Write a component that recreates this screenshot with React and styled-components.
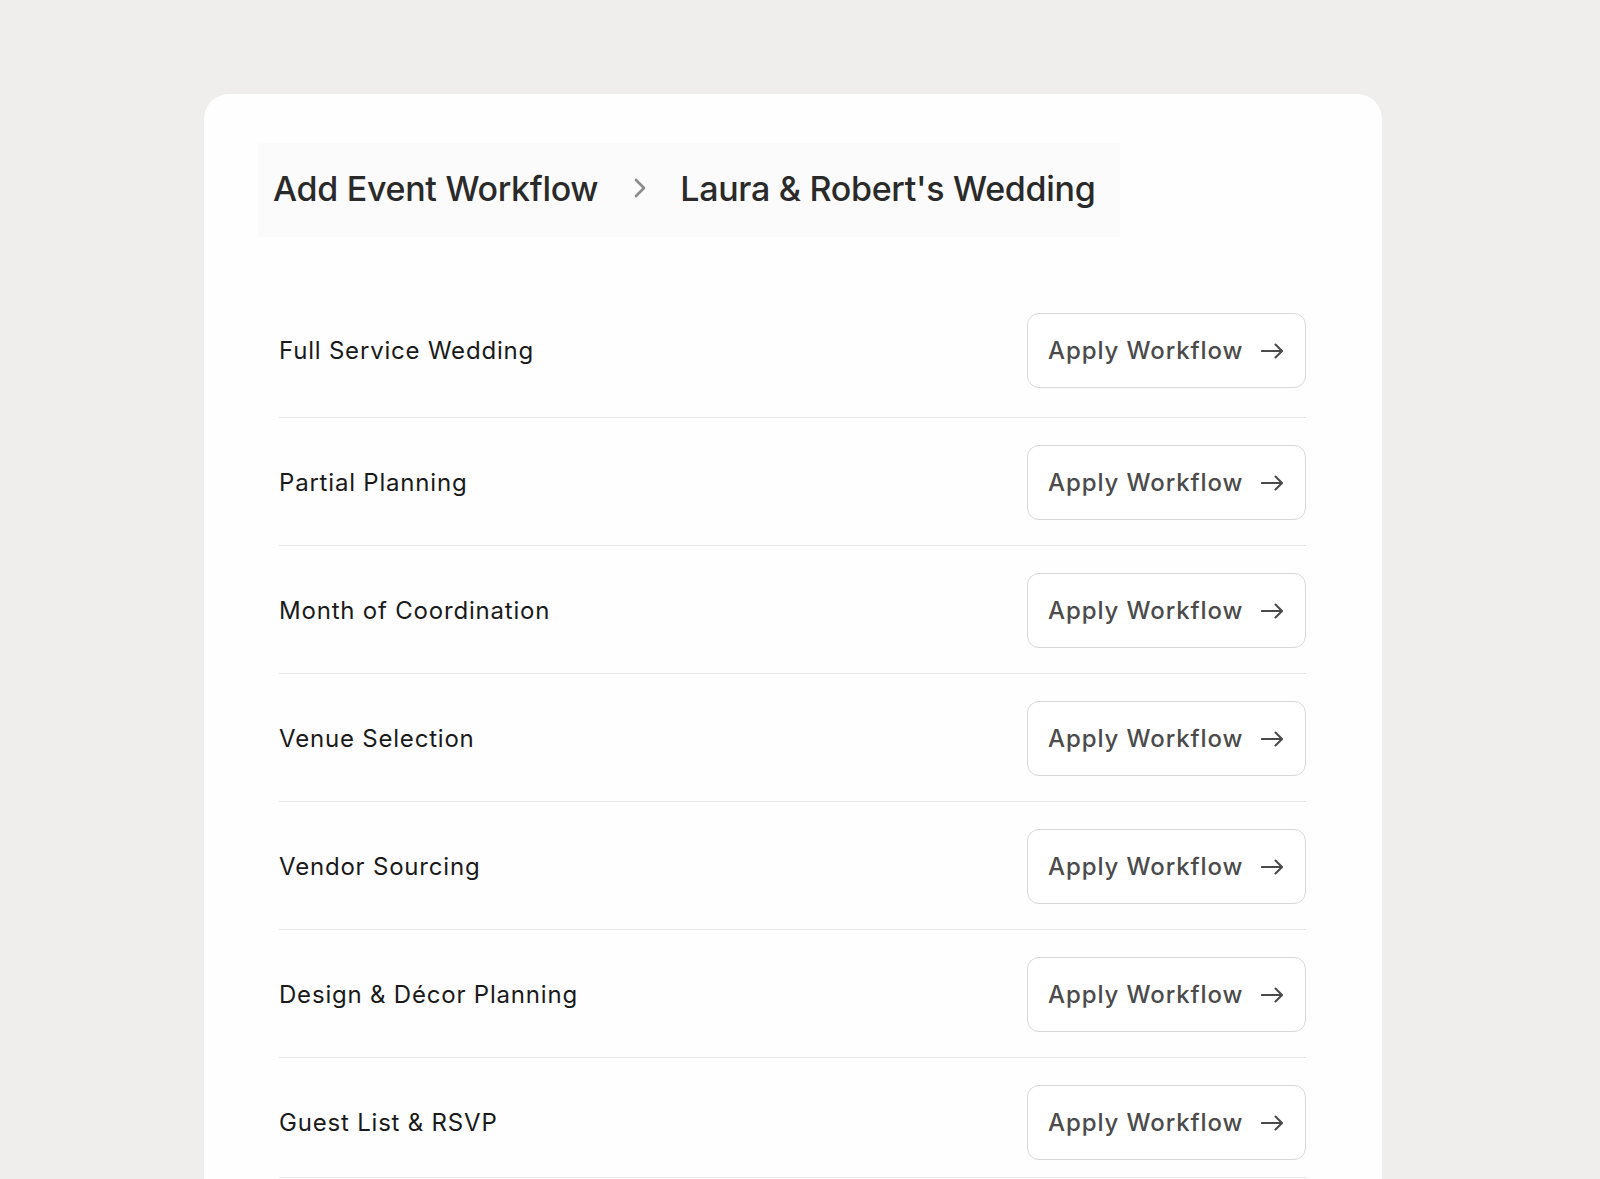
import React from "react";
import styled, { createGlobalStyle } from "styled-components";

const Global = createGlobalStyle`
  html, body { margin: 0; padding: 0; background: #efeeec; }
  body { font-family: Inter, "Noto Sans", sans-serif; -webkit-font-smoothing: antialiased; }
  * { box-sizing: border-box; }
`;

const Page = styled.div`
  padding: 94px 218px 0 204px;
`;

const Card = styled.section`
  width: 1178px;
  background: #fefefe;
  border-radius: 25px 25px 0 0;
  padding: 49px 0 40px;
`;

const HeaderWrap = styled.div`
  padding: 0 54px;
  margin-bottom: 49px;
`;

const Breadcrumb = styled.nav`
  display: inline-flex;
  align-items: center;
  height: 94px;
  padding: 0 24px 4px 15px;
  background: #fbfbfb;
`;

const Crumb = styled.span`
  font-size: 34px;
  font-weight: 500;
  color: #2a2a2a;
  letter-spacing: -0.3px;
  white-space: nowrap;
`;

const Sep = styled.span`
  display: flex;
  align-items: center;
  margin: 0 33px 0 35px;
`;

const List = styled.ul`
  list-style: none;
  margin: 0;
  padding: 0 76px 0 75px;
`;

const Row = styled.li`
  display: flex;
  align-items: center;
  justify-content: space-between;
  padding: 27px 0 25px;
  border-bottom: 1px solid #e6e6e6;
  &:first-child { padding-bottom: 29px; }
  &:last-child { padding-bottom: 17px; }
`;

const Label = styled.span`
  font-size: 24px;
  font-weight: 400;
  color: #1a1a1a;
  letter-spacing: 0.8px;
`;

const Button = styled.button`
  display: inline-flex;
  align-items: center;
  justify-content: space-between;
  gap: 18px;
  height: 75px;
  width: 279px;
  padding: 0 22px 0 20px;
  border: 1.5px solid #d8d8d8;
  border-radius: 12px;
  background: #fff;
  font-family: Inter, "Noto Sans", sans-serif;
  font-size: 24px;
  font-weight: 500;
  color: #4b4b4b;
  letter-spacing: 0.9px;
  white-space: nowrap;
  cursor: pointer;
`;

const Chevron = () => (
  <svg width="14" height="20" viewBox="0 0 14 20" fill="none">
    <path d="M3 2 L11 10 L3 18" stroke="#8c8c8c" strokeWidth="2.6" strokeLinecap="round" strokeLinejoin="round" />
  </svg>
);

const Arrow = () => (
  <svg width="22" height="16" viewBox="0 0 22 16" fill="none" style={{ flexShrink: 0 }}>
    <path d="M1 8 H21 M14.5 1.5 L21 8 L14.5 14.5" stroke="#4b4b4b" strokeWidth="2.1" strokeLinecap="round" strokeLinejoin="round" />
  </svg>
);

const workflows = [
  "Full Service Wedding",
  "Partial Planning",
  "Month of Coordination",
  "Venue Selection",
  "Vendor Sourcing",
  "Design & Décor Planning",
  "Guest List & RSVP",
];

export default function App() {
  return (
    <>
      <Global />
      <Page>
        <Card>
          <HeaderWrap>
            <Breadcrumb>
              <Crumb>Add Event Workflow</Crumb>
              <Sep><Chevron /></Sep>
              <Crumb>Laura &amp; Robert's Wedding</Crumb>
            </Breadcrumb>
          </HeaderWrap>
          <List>
            {workflows.map((w) => (
              <Row key={w}>
                <Label>{w}</Label>
                <Button>
                  Apply Workflow
                  <Arrow />
                </Button>
              </Row>
            ))}
          </List>
        </Card>
      </Page>
    </>
  );
}
